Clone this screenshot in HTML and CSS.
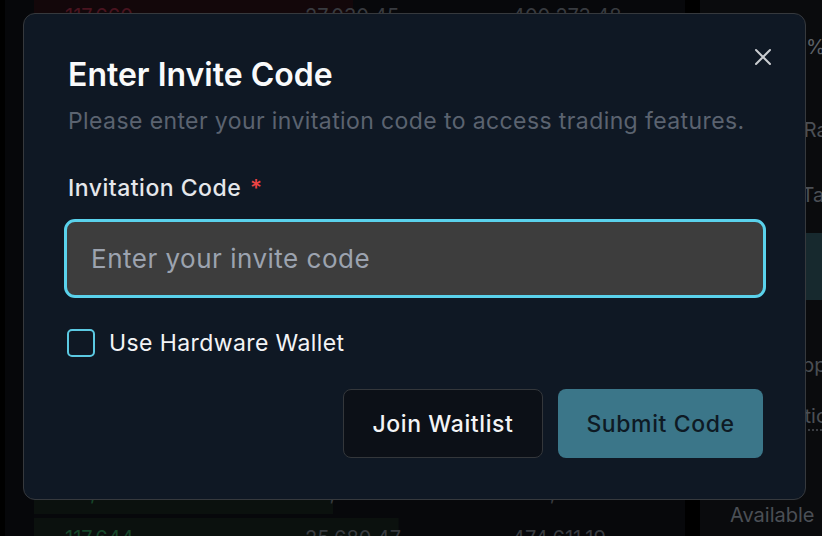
FILE: index.html
```html
<!DOCTYPE html>
<html lang="en">
  <head>
    <meta charset="UTF-8" />
    <meta name="viewport" content="width=device-width, initial-scale=1.0" />
    <title>Enter Invite Code</title>
    <link rel="stylesheet" href="styles.css">
  </head>
  <body>
    <div class="rail"></div>
    <div class="gutter"></div>

    <div class="book">
      <div class="asks">
        <div class="row ask" style="--depth: 49%">
          <span class="price">117,660</span><span>27,030.45</span><span>400,273.48</span>
        </div>
        <div class="row ask" style="--depth: 31%">
          <span class="price">117,655</span><span>18,204.10</span><span>373,243.03</span>
        </div>
        <div class="row ask" style="--depth: 22%">
          <span class="price">117,652</span><span>12,981.77</span><span>355,038.93</span>
        </div>
        <div class="row ask" style="--depth: 12%">
          <span class="price">117,650</span><span>6,420.02</span><span>342,057.16</span>
        </div>
      </div>
      <div class="spread"></div>
      <div class="bids">
        <div class="row bid" style="--depth: 46%">
          <span class="price">117,646</span><span>22,310.85</span><span>448,930.72</span>
        </div>
        <div class="row bid" style="--depth: 56%">
          <span class="price">117,644</span><span>25,680.47</span><span>474,611.19</span>
        </div>
      </div>
    </div>

    <div class="sep"></div>

    <div class="side">
      <div class="side-line">+124.84%</div>
      <div class="side-line">Borrow Rate</div>
      <div class="side-line">Market Take Profit</div>
      <div class="side-tab">Limit</div>
      <div class="side-line">Auto Slippage</div>
      <div class="side-line dotted">Liquidation Price</div>
      <div class="side-line avail">Available</div>
    </div>

    <div class="modal">
      <button class="close" aria-label="Close">
        <svg width="18" height="18" viewBox="0 0 18 18">
          <path d="M2 2 L16 16 M16 2 L2 16" stroke="#c9ccd0" stroke-width="2" stroke-linecap="round" />
        </svg>
      </button>
      <h1>Enter Invite Code</h1>
      <p class="subtitle">Please enter your invitation code to access trading features.</p>

      <label class="field-label" for="inviteCode">Invitation Code <span class="req">*</span></label>
      <input type="text" id="inviteCode" class="code-input" placeholder="Enter your invite code" />

      <label class="check">
        <span class="box"></span>
        Use Hardware Wallet
      </label>

      <div class="actions">
        <button class="btn-ghost">Join Waitlist</button>
        <button class="btn-submit">Submit Code</button>
      </div>
    </div>
  </body>
</html>
```

FILE: styles.css
```css
body {
  font-family: Inter, "Noto Sans", sans-serif;
  background-color: #06070a;
  margin: 0;
  padding: 0;
  width: 822px;
  height: 536px;
  overflow: hidden;
  display: flex;
  position: relative;
}
.rail {
  width: 5px;
  background-color: #000;
}
.gutter {
  width: 29px;
  background-color: #06070a;
}
.book {
  width: 651px;
  background-color: #07080b;
  display: flex;
  flex-direction: column;
  height: 536px;
}
.asks,
.bids {
  display: flex;
  flex-direction: column;
  gap: 4px;
}
.asks {
  margin-top: -27px;
}
.bids {
  margin-bottom: -23px;
}
.spread {
  flex: 1;
}
.row {
  height: 41px;
  flex-shrink: 0;
  display: grid;
  grid-template-columns: 240px 207px 1fr;
  padding-left: 31px;
  font-size: 20px;
  line-height: 41px;
  color: #383b40;
  background-repeat: no-repeat;
  background-size: var(--depth) 100%;
}
.ask {
  background-image: linear-gradient(#13070a, #13070a);
  line-height: 20px;
  padding-top: 33px;
  box-sizing: border-box;
}
.ask .price {
  color: #4a1420;
}
.bid {
  background-image: linear-gradient(#0b110e, #0b110e);
}
.bid .price {
  color: #17472a;
}
.sep {
  width: 15px;
  background-color: #000;
}
.side {
  flex: 1;
  background-color: #0a0b0d;
  padding-left: 30px;
  overflow: hidden;
  white-space: nowrap;
  font-size: 20px;
  color: #4b4f55;
}
.side-line {
  height: 30px;
  line-height: 30px;
}
.side-line:nth-child(1) {
  margin-top: 32px;
  color: #5d6166;
}
.side-line:nth-child(2) {
  margin-top: 53px;
}
.side-line:nth-child(3) {
  margin-top: 35px;
}
.side-tab {
  margin-top: 23px;
  height: 67px;
  line-height: 67px;
  background-color: #17292e;
  margin-left: -22px;
  padding-left: 22px;
  border-radius: 6px 0 0 6px;
  color: #2e4a50;
}
.side-line:nth-child(5) {
  margin-top: 50px;
}
.side-line:nth-child(6) {
  margin-top: 21px;
  padding-left: 6px;
}
.dotted {
  text-decoration: underline dotted #3a3d42;
  text-underline-offset: 6px;
}
.avail {
  margin-top: 69px;
}
.modal {
  position: absolute;
  left: 23px;
  top: 13px;
  width: 783px;
  height: 487px;
  box-sizing: border-box;
  background-color: #0f1824;
  border: 1px solid #36393d;
  border-radius: 12px;
  padding: 43px 42px 0 44px;
}
.close {
  position: absolute;
  top: 34px;
  right: 33px;
  background: none;
  border: none;
  padding: 0;
  width: 18px;
  height: 18px;
  cursor: pointer;
}
h1 {
  font-size: 32px;
  line-height: 36px;
  font-weight: 600;
  color: #f9fafb;
  margin: 0;
}
.subtitle {
  font-size: 23px;
  line-height: 30px;
  color: #5b6370;
  margin: 13px 0 0;
  letter-spacing: 0.4px;
}
.field-label {
  display: block;
  margin-top: 37px;
  font-size: 23px;
  line-height: 30px;
  font-weight: 500;
  color: #e5e7eb;
  letter-spacing: 0.5px;
}
.req {
  color: #ef4444;
  margin-left: 2px;
}
.code-input {
  display: block;
  margin: 16px 0 0 -4px;
  width: 702px;
  height: 79px;
  box-sizing: border-box;
  background-color: #3d3d3d;
  border: 3px solid #5ad2ec;
  border-radius: 11px;
  padding: 0 24px;
  font-family: Inter, "Noto Sans", sans-serif;
  font-size: 26px;
  letter-spacing: 0.5px;
  color: #f3f4f6;
  outline: none;
}
.code-input::placeholder {
  color: #9ca3af;
}
.check {
  display: flex;
  align-items: center;
  gap: 14px;
  margin: 31px 0 0 -1px;
  font-size: 23px;
  line-height: 28px;
  letter-spacing: 0.4px;
  color: #f3f4f6;
  cursor: pointer;
}
.box {
  width: 28px;
  height: 28px;
  box-sizing: border-box;
  border: 2px solid #5bc9e2;
  border-radius: 5px;
}
.actions {
  display: flex;
  justify-content: flex-end;
  gap: 15px;
  margin-top: 32px;
}
.actions button {
  height: 69px;
  border-radius: 8px;
  font-family: Inter, "Noto Sans", sans-serif;
  font-size: 23px;
  font-weight: 500;
  letter-spacing: 0.6px;
  cursor: pointer;
}
.btn-ghost {
  width: 200px;
  background-color: #0c1017;
  border: 1px solid #34373b;
  color: #f3f4f6;
}
.btn-submit {
  width: 205px;
  background-color: #3b7689;
  border: none;
  color: #0e1a24;
}
```
